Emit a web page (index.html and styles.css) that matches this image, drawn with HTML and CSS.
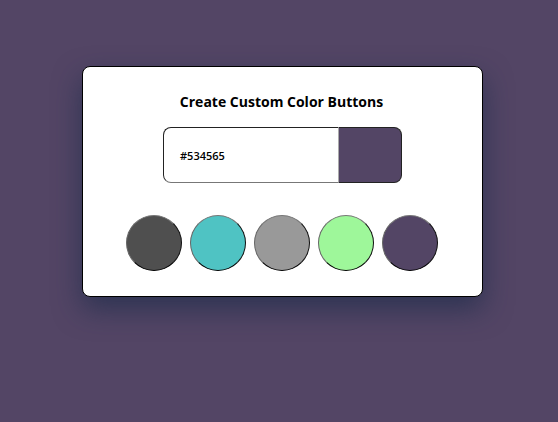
FILE: index.html
```html
<!DOCTYPE html>
<html>
<head>
<meta charset="utf-8">
<link rel="stylesheet" href="styles.css">
</head>
<body>
<div class="stage">
  <div class="card">
    <h1 class="title">Create Custom Color Buttons</h1>
    <div class="picker">
      <div class="hex">#534565</div>
      <div class="swatch"></div>
    </div>
    <div class="dots">
      <button class="dot dot-1"></button>
      <button class="dot dot-2"></button>
      <button class="dot dot-3"></button>
      <button class="dot dot-4"></button>
      <button class="dot dot-5"></button>
    </div>
  </div>
</div>
</body>
</html>
```
FILE: styles.css
```css
html, body {
  margin: 0;
  padding: 0;
  background: #534565;
  height: 100%;
}
.stage {
  padding: 66px 0 0 82px;
}
.card {
  box-sizing: border-box;
  width: 401px;
  height: 231px;
  padding-right: 2px;
  background: #fff;
  border: 1px solid #000;
  border-radius: 8px;
  box-shadow: 0 12px 28px rgba(20, 40, 70, 0.6);
  display: flex;
  flex-direction: column;
  align-items: center;
  font-family: "Open Sans", "Noto Sans", sans-serif;
}
.title {
  margin: 24px 0 0;
  font-size: 14px;
  font-weight: 700;
  line-height: 22px;
  color: #000;
}
.picker {
  margin-top: 14px;
  margin-left: 2px;
  display: flex;
  height: 56px;
}
.hex {
  box-sizing: border-box;
  width: 175px;
  height: 56px;
  border: 1px solid #222;
  border-bottom-color: #777;
  border-right: none;
  border-radius: 8px 0 0 8px;
  padding-left: 16px;
  display: flex;
  align-items: center;
  font-size: 11px;
  font-weight: 600;
  color: #000;
}
.swatch {
  box-sizing: border-box;
  width: 64px;
  height: 56px;
  background: #534565;
  border: 1px solid #222;
  border-left: 1px solid #aaa;
  border-radius: 0 8px 8px 0;
}
.dots {
  margin-top: 32px;
  display: flex;
  gap: 8px;
}
.dot {
  box-sizing: border-box;
  width: 56px;
  height: 56px;
  border-radius: 50%;
  padding: 0;
  border: 1px solid;
  border-color: #777 #111 #000 #666;
}
.dot-1 { background: #4f4f4f; }
.dot-2 { background: #4fc3c3; }
.dot-3 { background: #999999; }
.dot-4 { background: #9ef79a; }
.dot-5 { background: #534565; }
```
